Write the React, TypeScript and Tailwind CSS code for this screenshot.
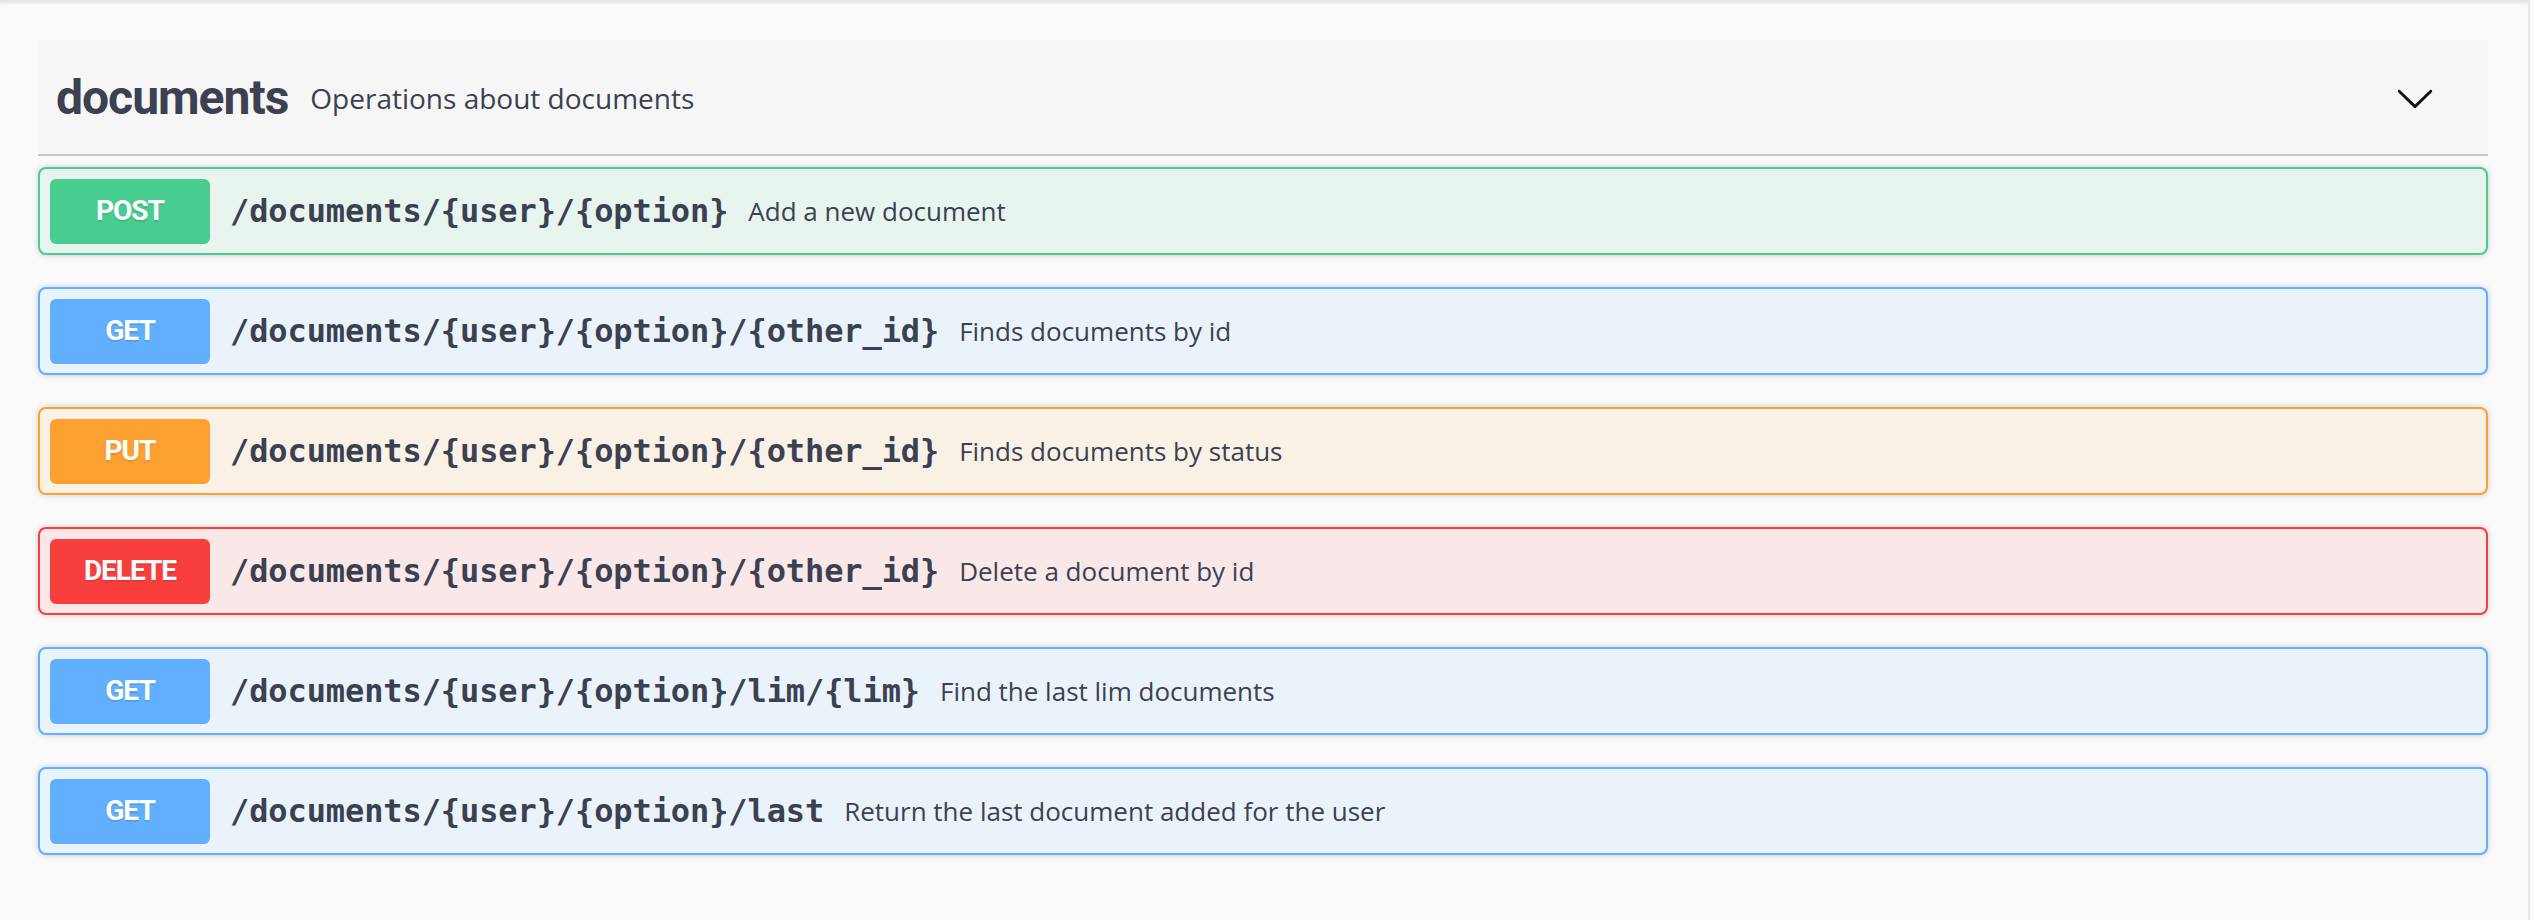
import React from "react";

type Op = {
  method: string;
  path: string;
  desc: string;
  border: string;
  bg: string;
  badge: string;
};

const ops: Op[] = [
  { method: "POST", path: "/documents/{user}/{option}", desc: "Add a new document", border: "border-[#49cc90]", bg: "bg-[#e8f5ef]", badge: "bg-[#49cc90]" },
  { method: "GET", path: "/documents/{user}/{option}/{other_id}", desc: "Finds documents by id", border: "border-[#61affe]", bg: "bg-[#ebf3fa]", badge: "bg-[#61affe]" },
  { method: "PUT", path: "/documents/{user}/{option}/{other_id}", desc: "Finds documents by status", border: "border-[#fca130]", bg: "bg-[#faf1e6]", badge: "bg-[#fca130]" },
  { method: "DELETE", path: "/documents/{user}/{option}/{other_id}", desc: "Delete a document by id", border: "border-[#f93e3e]", bg: "bg-[#fae7e7]", badge: "bg-[#f93e3e]" },
  { method: "GET", path: "/documents/{user}/{option}/lim/{lim}", desc: "Find the last lim documents", border: "border-[#61affe]", bg: "bg-[#ebf3fa]", badge: "bg-[#61affe]" },
  { method: "GET", path: "/documents/{user}/{option}/last", desc: "Return the last document added for the user", border: "border-[#61affe]", bg: "bg-[#ebf3fa]", badge: "bg-[#61affe]" },
];

function Row({ op }: { op: Op }) {
  return (
    <div
      className={`flex items-center h-[88px] border-2 ${op.border} ${op.bg} rounded-[8px] p-[10px] shadow-[0_0_6px_rgba(0,0,0,0.19)]`}
    >
      <div
        className={`${op.badge} w-[160px] h-[65px] rounded-[6px] flex items-center justify-center text-white text-[28px] font-bold tracking-[-1px] [text-shadow:0_2px_0_rgba(0,0,0,0.1)]`}
        style={{ fontFamily: "Roboto, 'Noto Sans', sans-serif" }}
      >
        {op.method}
      </div>
      <div
        className="px-[20px] text-[32px] tracking-[-0.1px] font-bold text-[#3b4151] leading-none"
        style={{ fontFamily: "'DejaVu Sans Mono', monospace" }}
      >
        {op.path}
      </div>
      <div
        className="text-[26px] text-[#3b4151] leading-none"
        style={{ fontFamily: "'Open Sans', sans-serif" }}
      >
        {op.desc}
      </div>
    </div>
  );
}

export default function App() {
  return (
    <div className="w-[2534px] h-[920px] bg-[#fafafa] flex overflow-hidden">
      <div className="w-[2528px] flex flex-col">
        <div className="h-[2px] bg-[#e6e6e6] shadow-[0_1px_3px_rgba(0,0,0,0.12)]" />
        <div className="pl-[38px] pr-[40px] pt-[40px]">
          <div className="h-[114px] bg-[#f6f6f6] border-b-2 border-[#c1c3c7] flex items-center mb-[11px]">
            <div
              className="pl-[18px] text-[48px] font-bold text-[#3b4151] tracking-[-1px] leading-none"
              style={{ fontFamily: "Roboto, 'Noto Sans', sans-serif" }}
            >
              documents
            </div>
            <div
              className="ml-[22px] text-[28px] text-[#3b4151] leading-none"
              style={{ fontFamily: "'Open Sans', sans-serif" }}
            >
              Operations about documents
            </div>
            <div className="flex-1" />
            <svg width="40" height="40" viewBox="0 0 20 20" className="mr-[53px]">
              <path
                fill="#111"
                d="M17.418 6.109c.272-.268.709-.268.979 0s.271.701 0 .969l-7.908 7.83c-.27.268-.707.268-.979 0l-7.908-7.830c-.27-.268-.27-.701 0-.969.271-.268.709-.268.979 0L10 13.25l7.418-7.141z"
              />
            </svg>
          </div>
          <div className="flex flex-col gap-[32px]">
            {ops.map((op, i) => (
              <Row key={i} op={op} />
            ))}
          </div>
        </div>
      </div>
      <div className="w-[6px] border-l-2 border-[#e6e6e6] bg-[#fbfbfb]" />
    </div>
  );
}
